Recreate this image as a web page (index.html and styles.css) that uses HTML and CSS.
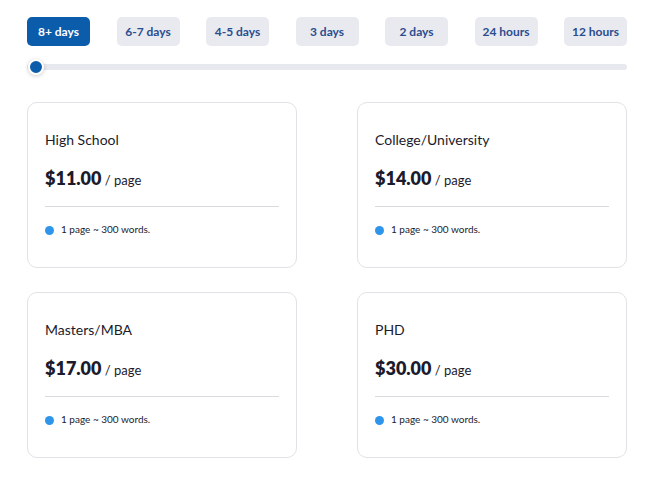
FILE: index.html
```html
<!DOCTYPE html>
<html lang="en">
<head>
  <meta charset="UTF-8" />
  <meta name="viewport" content="width=device-width, initial-scale=1.0" />
  <title>Pricing</title>
  <link rel="stylesheet" href="styles.css">
</head>
<body>
  <div class="pricing">
    <div class="deadlines">
      <button class="deadline-btn active">8+ days</button>
      <button class="deadline-btn">6-7 days</button>
      <button class="deadline-btn">4-5 days</button>
      <button class="deadline-btn">3 days</button>
      <button class="deadline-btn">2 days</button>
      <button class="deadline-btn">24 hours</button>
      <button class="deadline-btn">12 hours</button>
    </div>
    <div class="slider">
      <span class="slider-thumb"></span>
    </div>

    <div class="cards">
      <div class="card">
        <h3 class="card-title">High School</h3>
        <p class="card-price"><strong>$11.00</strong> / page</p>
        <p class="card-note"><span class="dot"></span>1 page ~ 300 words.</p>
      </div>
      <div class="card">
        <h3 class="card-title">College/University</h3>
        <p class="card-price"><strong>$14.00</strong> / page</p>
        <p class="card-note"><span class="dot"></span>1 page ~ 300 words.</p>
      </div>
      <div class="card">
        <h3 class="card-title">Masters/MBA</h3>
        <p class="card-price"><strong>$17.00</strong> / page</p>
        <p class="card-note"><span class="dot"></span>1 page ~ 300 words.</p>
      </div>
      <div class="card">
        <h3 class="card-title">PHD</h3>
        <p class="card-price"><strong>$30.00</strong> / page</p>
        <p class="card-note"><span class="dot"></span>1 page ~ 300 words.</p>
      </div>
    </div>
  </div>
</body>
</html>
```

FILE: styles.css
```css
* {
  box-sizing: border-box;
  margin: 0;
  padding: 0;
}
body {
  font-family: Lato, "Noto Sans", sans-serif;
  background: #fff;
  color: #1b1b2b;
}
.pricing {
  width: 600px;
  margin: 17px 0 0 27px;
}
.deadlines {
  display: flex;
  justify-content: space-between;
}
.deadline-btn {
  width: 63px;
  height: 29px;
  border: none;
  border-radius: 5px;
  background: #e9e9f0;
  color: #2a4d8f;
  font-family: inherit;
  font-size: 12px;
  font-weight: 700;
  cursor: pointer;
}
.deadline-btn.active {
  background: #0b5cab;
  color: #fff;
}
.slider {
  position: relative;
  height: 6px;
  margin-top: 18px;
  border-radius: 3px;
  background: #e8e8ef;
}
.slider-thumb {
  position: absolute;
  left: 1px;
  top: -5px;
  width: 16px;
  height: 16px;
  border-radius: 50%;
  background: #0b5cab;
  border: 2px solid #fff;
  box-shadow: 0 1px 4px rgba(0,0,0,0.2);
}
.cards {
  display: grid;
  grid-template-columns: 270px 270px;
  justify-content: space-between;
  row-gap: 24px;
  margin-top: 32px;
}
.card {
  height: 166px;
  padding: 28px 17px 0 17px;
  border: 1px solid #e2e2e6;
  border-radius: 10px;
}
.card-title {
  font-size: 14px;
  font-weight: 400;
  line-height: 18px;
}
.card-price {
  margin-top: 18px;
  padding-bottom: 15px;
  border-bottom: 1px solid #d9d9de;
  font-size: 13px;
  line-height: 22px;
}
.card-price strong {
  font-size: 18px;
  font-weight: 800;
}
.card-note {
  display: flex;
  align-items: center;
  margin-top: 16px;
  font-size: 10px;
}
.dot {
  width: 9px;
  height: 9px;
  margin-right: 7px;
  margin-top: 3px;
  border-radius: 50%;
  background: #2f95ea;
}
```
